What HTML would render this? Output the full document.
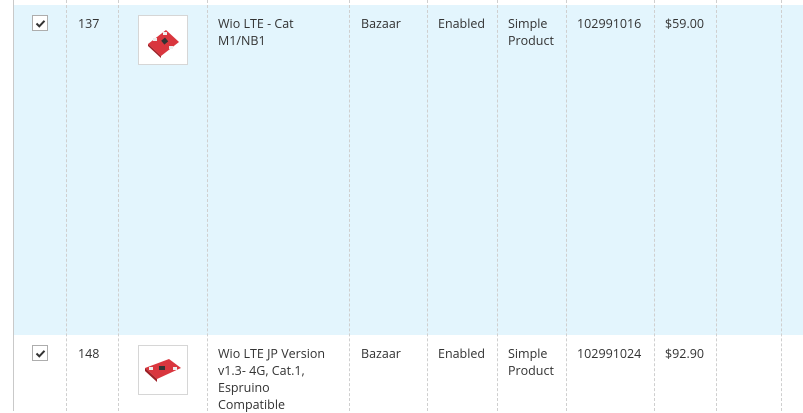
<!DOCTYPE html>
<html><head><meta charset="utf-8"><style>
*{margin:0;padding:0;box-sizing:border-box}
body{width:803px;height:411px;overflow:hidden;background:#fff;position:relative;font-family:"Open Sans","Liberation Sans","DejaVu Sans",sans-serif;font-size:12.5px;color:#333}
.row1{position:absolute;left:14px;top:5px;width:789px;height:330px;background:#e3f5fd}
.lb{position:absolute;left:13px;top:0;width:1px;height:411px;background:#c9c9c9}
.d{position:absolute;top:0;height:411px;width:0;border-left:1px dashed #cfcfcf}
.t{position:absolute;line-height:17px;white-space:nowrap}
.cb{position:absolute;width:16px;height:16px;border:1px solid #adadad;background:#fff}
.cb svg{position:absolute;left:2px;top:2px}
.img{position:absolute;width:50px;height:50px;border:1px solid #d6d6d6;background:#fff}
</style></head><body>
<div class="row1"></div>
<div class="lb"></div>
<div class="d" style="left:66px"></div>
<div class="d" style="left:118px"></div>
<div class="d" style="left:207px"></div>
<div class="d" style="left:349px"></div>
<div class="d" style="left:427px"></div>
<div class="d" style="left:497px"></div>
<div class="d" style="left:566px"></div>
<div class="d" style="left:654px"></div>
<div class="d" style="left:716px"></div>
<div class="d" style="left:781px"></div>

<div class="cb" style="left:32px;top:15px"><svg width="11" height="11" viewBox="0 0 11 11"><path d="M1.5 5.5 L4.3 8.3 L9.5 2.8" stroke="#333" stroke-width="2" fill="none"/></svg></div>
<div class="t" style="left:78px;top:15px">137</div>
<div class="img" style="left:138px;top:15px"><svg width="48" height="48" viewBox="0 0 48 48"><polygon points="9,28 27,14 40,26 22,40" fill="#d9363e"/><polygon points="9,28 22,40 22,42 9,30" fill="#9c1f25"/><rect x="23" y="23" width="5" height="5" fill="#333" transform="rotate(-40 25 25)"/><rect x="14" y="22" width="4" height="3" fill="#eee"/><rect x="30" y="30" width="4" height="3" fill="#eee"/><rect x="24" y="16" width="4" height="3" fill="#eee"/></svg></div>
<div class="t" style="left:218px;top:15px">Wio LTE - Cat<br>M1/NB1</div>
<div class="t" style="left:361px;top:15px">Bazaar</div>
<div class="t" style="left:438px;top:15px">Enabled</div>
<div class="t" style="left:508px;top:15px">Simple<br>Product</div>
<div class="t" style="left:577px;top:15px">102991016</div>
<div class="t" style="left:665px;top:15px">$59.00</div>

<div class="cb" style="left:32px;top:345px"><svg width="11" height="11" viewBox="0 0 11 11"><path d="M1.5 5.5 L4.3 8.3 L9.5 2.8" stroke="#333" stroke-width="2" fill="none"/></svg></div>
<div class="t" style="left:78px;top:345px">148</div>
<div class="img" style="left:138px;top:345px"><svg width="48" height="48" viewBox="0 0 48 48"><polygon points="6,22 30,13 42,22 18,33" fill="#d9363e"/><polygon points="6,22 18,33 18,36 6,25" fill="#9c1f25"/><rect x="20" y="20" width="6" height="4" fill="#333"/><rect x="10" y="21" width="4" height="3" fill="#eee"/><rect x="34" y="21" width="4" height="3" fill="#eee"/></svg></div>
<div class="t" style="left:218px;top:345px">Wio LTE JP Version<br>v1.3- 4G, Cat.1,<br>Espruino<br>Compatible</div>
<div class="t" style="left:361px;top:345px">Bazaar</div>
<div class="t" style="left:438px;top:345px">Enabled</div>
<div class="t" style="left:508px;top:345px">Simple<br>Product</div>
<div class="t" style="left:577px;top:345px">102991024</div>
<div class="t" style="left:665px;top:345px">$92.90</div>
</body></html>
